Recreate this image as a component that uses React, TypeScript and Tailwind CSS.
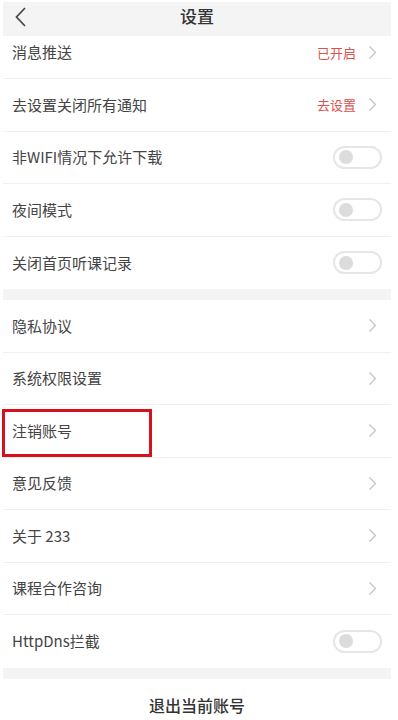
import { ReactNode } from 'react';

type Row =
  | { label: string; kind: 'link'; value?: string }
  | { label: string; kind: 'toggle' };

const SECTION_ONE: Row[] = [
  { label: '去设置关闭所有通知', kind: 'link', value: '去设置' },
  { label: '非WIFI情况下允许下载', kind: 'toggle' },
  { label: '夜间模式', kind: 'toggle' },
  { label: '关闭首页听课记录', kind: 'toggle' },
];

const SECTION_TWO: Row[] = [
  { label: '隐私协议', kind: 'link' },
  { label: '系统权限设置', kind: 'link' },
  { label: '注销账号', kind: 'link' },
  { label: '意见反馈', kind: 'link' },
  { label: '关于 233', kind: 'link' },
  { label: '课程合作咨询', kind: 'link' },
  { label: 'HttpDns拦截', kind: 'toggle' },
];

const FONT = { fontFamily: '"Noto Sans CJK SC", "Noto Sans", sans-serif' };

function Chevron() {
  return (
    <svg width="9" height="15" viewBox="0 0 9 15" className="shrink-0">
      <path d="M1.5 1.5 L7.5 7.5 L1.5 13.5" fill="none" stroke="#c4c4c4" strokeWidth="1.3" />
    </svg>
  );
}

function Toggle() {
  return (
    <div className="w-[49px] h-[23px] rounded-full border-2 border-[#e6e6e6] bg-white flex items-center pl-[4px] mr-[-5px]">
      <div className="w-[14px] h-[14px] rounded-full bg-[#dcdcdc]" />
    </div>
  );
}

function SettingRow({ row, last, children }: { row: Row; last?: boolean; children?: ReactNode }) {
  return (
    <div
      className={`relative h-[52.5px] flex items-center justify-between pl-[9px] pr-[14px] ${
        last ? '' : 'border-b border-[#f0f0f0]'
      }`}
    >
      <span className="text-[15px] text-[#444]">{row.label}</span>
      {row.kind === 'toggle' ? (
        <Toggle />
      ) : (
        <div className="flex items-center gap-[12px]">
          {row.value && <span className="text-[13px] text-[#d9524e]">{row.value}</span>}
          <Chevron />
        </div>
      )}
      {children}
    </div>
  );
}

export default function App() {
  return (
    <div className="w-[398px] h-[720px] bg-white overflow-hidden" style={FONT}>
      <div className="ml-[3px] w-[388px] relative">
        {/* First row sits partly under the header */}
        <div className="relative h-[79px] pt-[2px]">
          <div className="absolute left-0 right-0 top-[2px] h-[34px] bg-[#f4f4f4] flex items-center justify-center pb-[6px] z-10">
            <svg width="14" height="22" viewBox="0 0 14 22" className="absolute left-[11px] top-[4px]">
              <path d="M11 2 L2.5 11 L11 20" fill="none" stroke="#4a4a4a" strokeWidth="1.8" />
            </svg>
            <span className="text-[17px] font-medium text-[#333]">设置</span>
          </div>
          <div className="absolute left-0 right-0 bottom-0 h-[52.5px] flex items-center justify-between pl-[9px] pr-[14px] border-b border-[#f0f0f0]">
            <span className="text-[15px] text-[#444]">消息推送</span>
            <div className="flex items-center gap-[12px]">
              <span className="text-[13px] text-[#d9524e]">已开启</span>
              <Chevron />
            </div>
          </div>
        </div>

        {SECTION_ONE.map((row, i) => (
          <SettingRow key={row.label} row={row} last={i === SECTION_ONE.length - 1} />
        ))}

        <div className="h-[11px] bg-[#f4f4f4]" />

        {SECTION_TWO.map((row, i) => (
          <SettingRow key={row.label} row={row} last={i === SECTION_TWO.length - 1}>
            {row.label === '注销账号' && (
              <div className="absolute left-[-1px] top-[4px] w-[150px] h-[48px] border-[3px] border-[#d8101c]" />
            )}
          </SettingRow>
        ))}

        <div className="h-[11px] bg-[#f4f4f4]" />

        <div className="h-[52px] flex items-center justify-center">
          <span className="text-[16px] font-medium text-[#333]">退出当前账号</span>
        </div>
      </div>
    </div>
  );
}
